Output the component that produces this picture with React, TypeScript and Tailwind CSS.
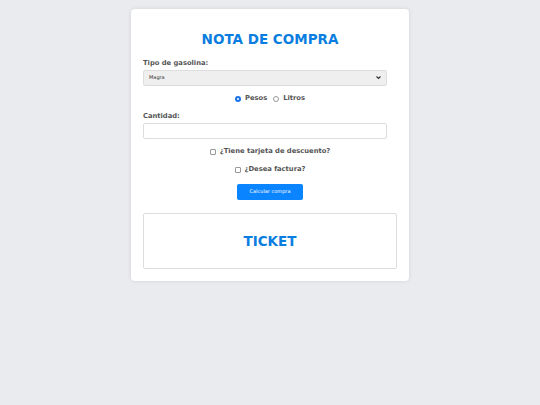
export default function App() {
  return (
    <div className="min-h-screen bg-[#e9ebef] pt-[9px] font-['DejaVu_Sans',Verdana,sans-serif]">
      <div className="mx-auto w-[278px] rounded-[4px] bg-white px-3 pb-3 pt-[21px] shadow-[0_0_4px_rgba(0,0,0,0.1)]">
        <h1 className="text-center text-[13.5px] font-bold leading-[18px] text-[#0a7ee0]">
          NOTA DE COMPRA
        </h1>

        <label className="mt-[11px] block text-[6.75px] font-bold leading-[9px] text-[#555]">
          Tipo de gasolina:
        </label>
        <div className="mt-[2px] flex h-4 w-[244px] items-center justify-between rounded-[2px] border border-[#ddd] bg-[#efefef] px-[5px]">
          <span className="text-[5px] text-[#333]">Magra</span>
          <svg width="5" height="4" viewBox="0 0 10 8">
            <path d="M1 1l4 4 4-4" stroke="#333" strokeWidth="2.2" fill="none" />
          </svg>
        </div>

        <div className="mt-[8px] flex items-center justify-center gap-[4px] text-[6.75px] font-bold leading-[9px] text-[#555]">
          <span className="flex h-[6px] w-[6px] items-center justify-center rounded-full bg-[#1a73e8]">
            <span className="h-[2px] w-[2px] rounded-full bg-white" />
          </span>
          <span>Pesos</span>
          <span className="ml-[2px] h-[6px] w-[6px] rounded-full border border-[#999]" />
          <span>Litros</span>
        </div>

        <label className="mt-[9px] block text-[6.75px] font-bold leading-[9px] text-[#555]">
          Cantidad:
        </label>
        <div className="mt-[2px] h-4 w-[244px] rounded-[2px] border border-[#ddd] bg-white" />

        <div className="mt-[8px] flex items-center justify-center gap-[4px] text-[6.75px] font-bold leading-[9px] text-[#555]">
          <span className="h-[6px] w-[6px] rounded-[1px] border border-[#999]" />
          <span>¿Tiene tarjeta de descuento?</span>
        </div>

        <div className="mt-[9px] flex items-center justify-center gap-[4px] text-[6.75px] font-bold leading-[9px] text-[#555]">
          <span className="h-[6px] w-[6px] rounded-[1px] border border-[#999]" />
          <span>¿Desea factura?</span>
        </div>

        <div className="mt-[10px] flex justify-center">
          <button className="h-4 w-[66px] rounded-[2px] bg-[#0a84ff] text-[5px] text-white">
            Calcular compra
          </button>
        </div>

        <div className="mt-[13px] flex h-[56px] w-full items-center justify-center rounded-[2px] border border-[#ddd]">
          <h2 className="text-[13.5px] font-bold text-[#0a7ee0]">TICKET</h2>
        </div>
      </div>
    </div>
  );
}
